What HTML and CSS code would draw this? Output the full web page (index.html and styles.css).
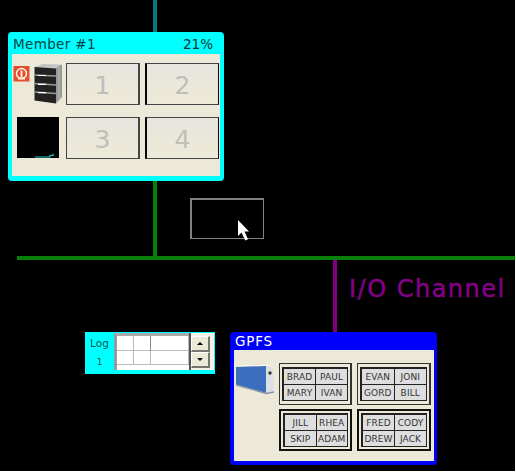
FILE: index.html
```html
<!DOCTYPE html>
<html lang="en">
<head>
<meta charset="utf-8">
<title>Cluster topology</title>
<link rel="stylesheet" href="styles.css">
</head>
<body>
<main class="canvas">
  <div class="wire wire-top"></div>
  <div class="wire wire-drop"></div>
  <div class="wire wire-bus"></div>
  <div class="wire wire-io"></div>
  <div class="io-label">I/O Channel</div>

  <section class="node member">
    <header class="member-head"><span class="member-name">Member #1</span><span class="member-load">21%</span></header>
    <div class="member-body">
      <div class="member-icons">
        <svg class="server" width="50" height="42" viewBox="0 0 50 42">
          <rect x="0.500" y="3" width="16" height="15.500" fill="#e2502f"/>
          <circle cx="8.500" cy="10.500" r="5" fill="none" stroke="#fff0e4" stroke-width="1.500"/>
          <path d="M8.500 7.500v6.500M5 15.500h7" fill="none" stroke="#fff0e4" stroke-width="1.800"/>
          <path d="M21.500 4L30 1L49 1.500L43 6Z" fill="#c4c4c4"/>
          <path d="M43 5L49 1.500V34L43 40.500Z" fill="#999"/>
          <path d="M46 4v32" stroke="#bcbcbc" stroke-width="1"/>
          <path d="M21.500 4L43 5.500V40.500L21.500 37.500Z" fill="#222"/>
          <path d="M21.500 12l21.500 1M21.500 20.500l21.500 1.500M21.500 29l21.500 1.500" stroke="#999" stroke-width="1.400" fill="none"/>
          <path d="M25 12.500h8M25 21.300h8M25 29.700h8" stroke="#fff" stroke-width="1.200"/>
        </svg>
        <svg class="monitor" width="42" height="41" viewBox="0 0 42 41">
          <rect width="42" height="41" fill="#000"/>
          <path d="M18 40h15v-1.500h3v-2" fill="none" stroke="#20c9cc" stroke-width="1.200"/>
        </svg>
      </div>
      <div class="slots">
        <div class="slot">1</div><div class="slot dark">2</div>
        <div class="slot">3</div><div class="slot dark">4</div>
      </div>
    </div>
  </section>

  <div class="ghost"></div>
  <svg class="cursor" width="12" height="22" viewBox="0 0 12 22">
    <path d="M0 0V16L3.500 12.500L7.300 20.500L10 19.300L6.500 11.500H11Z" fill="#fff"/>
  </svg>

  <section class="node log">
    <div class="log-label"><span>Log</span><span class="log-count">1</span></div>
    <div class="log-grid"><i></i><i></i><i></i><i></i><i></i><i></i></div>
    <div class="log-spin"><div class="spin up"></div><div class="spin down"></div></div>
  </section>

  <section class="node gpfs">
    <header class="gpfs-head">GPFS</header>
    <div class="gpfs-body">
      <svg class="disk" width="40" height="32" viewBox="0 0 40 32">
        <path d="M0 2L8 0H36L30 1.500Z" fill="#f4f3ee"/>
        <path d="M0 2L30 1V28L0 19.500Z" fill="#3b6fbd"/>
        <path d="M30 1L37 3L38 27L30 28.500Z" fill="#dcdfe3"/>
        <path d="M0 20L30 28.500L38 27" fill="none" stroke="#8594aa" stroke-width="1.300"/>
        <circle cx="34" cy="8" r="1.700" fill="#333"/>
      </svg>
      <div class="groups">
        <div class="group"><div class="names"><b>BRAD</b><b>PAUL</b><b>MARY</b><b>IVAN</b></div></div>
        <div class="group"><div class="names"><b>EVAN</b><b>JONI</b><b>GORD</b><b>BILL</b></div></div>
        <div class="group strong"><div class="names"><b>JILL</b><b>RHEA</b><b>SKIP</b><b>ADAM</b></div></div>
        <div class="group strong"><div class="names"><b>FRED</b><b>CODY</b><b>DREW</b><b>JACK</b></div></div>
      </div>
    </div>
  </section>
</main>
</body>
</html>
```
FILE: styles.css
```css
* { box-sizing: border-box; }
body { margin: 0; background: #fff; font-family: "DejaVu Sans", sans-serif; }
.canvas { position: relative; width: 515px; height: 471px; background: #000; overflow: hidden; }
.wire, .node, .io-label, .ghost, .cursor { position: absolute; }
.wire-top { left: 153px; top: 0; width: 4px; height: 33px; background: #08797c; }
.wire-drop { left: 153px; top: 179px; width: 4px; height: 79px; background: #087f08; }
.wire-bus { left: 17px; top: 256px; width: 498px; height: 4px; background: #087f08; }
.wire-io { left: 333px; top: 260px; width: 4px; height: 73px; background: #800080; }
.io-label { left: 349px; top: 274px; font-size: 24px; line-height: 30px; color: #850085; white-space: nowrap; -webkit-text-stroke: .5px #850085; letter-spacing: 1.5px; }

.member { left: 8px; top: 32px; width: 216px; height: 149px; background: #0ff; border-radius: 4px; padding: 0 4px 5px; display: flex; flex-direction: column; }
.member-head { height: 22px; display: flex; justify-content: space-between; padding: 0 7px 0 1px; font-size: 13.5px; line-height: 24px; color: #064444; }
.member-name { letter-spacing: .35px; }
.member-load { color: #033; }
.member-body { flex: 1; background: #ece9d8; display: flex; padding: 9px 1px 0 1px; }
.member-icons { width: 53px; display: flex; flex-direction: column; }
.server { display: block; }
.monitor { display: block; margin: 12px 0 0 4px; }
.slots { display: grid; grid-template-columns: 74px 74px; grid-template-rows: 42px 42px; gap: 12px 5px; align-content: start; }
.slot { border: 1px solid #444; border-right-width: 2px; background: linear-gradient(#e6e5e0, #ece9d8 70%); color: #bebeba; font-size: 25px; line-height: 43px; text-align: center; }
.slot.dark { border-left: 2px solid #080808; border-right: 1px solid #080808; }

.ghost { left: 190px; top: 198px; width: 74px; height: 41px; border: 2px solid #828282; border-width: 2px 1px 1px 2px; }
.cursor { left: 238px; top: 220px; }

.log { left: 85px; top: 332px; width: 130px; height: 42px; background: #0ff; display: flex; padding: 1px 1px 4px 0; }
.log-label { width: 29px; display: flex; flex-direction: column; align-items: center; font-size: 10.5px; line-height: 20px; color: #055; }
.log-count { font-size: 9px; line-height: 18px; }
.log-grid { width: 75px; background: #fff; border-top: 3px solid #aaa; border-left: 3px solid #999; display: grid; grid-template-columns: 17px 17px 1fr; grid-template-rows: 15px 14px; }
.log-grid i { border-right: 1px solid #bbb; border-bottom: 1px solid #bbb; }
.log-grid i:nth-child(2) { border-right-color: #888; }
.log-spin { flex: 1; background: #f4f2e8; padding: 3px 4px 2px 0; border-left: 2px solid #555; display: flex; flex-direction: column; }
.spin { flex: 1; background: #ece9d8; border: 1px solid #fff; border-right: 2px solid #77776f; border-bottom: 2px solid #77776f; display: flex; align-items: center; justify-content: center; }
.spin::after { content: ""; border: 3px solid transparent; }
.up::after { border-top: 0; border-bottom-color: #000; }
.down::after { border-bottom: 0; border-top-color: #000; }

.gpfs { left: 230px; top: 332px; width: 207px; height: 133px; background: #0000fa; border-radius: 4px; padding: 0 3px 4px 4px; display: flex; flex-direction: column; }
.gpfs-head { height: 18px; padding-left: 1px; font-size: 13.5px; line-height: 19px; letter-spacing: .8px; color: #fff; }
.gpfs-body { flex: 1; background: #ece9d8; display: flex; padding: 13px 0 0 2px; }
.disk { display: block; margin-top: 2px; }
.groups { display: grid; grid-template-columns: 73px 74px; grid-template-rows: 42px 42px; gap: 4px 5px; align-content: start; margin-left: 3px; }
.group { border: 1px solid #333; border-right: 2px solid #333; padding: 3px 2px; }
.group.strong { border: 2px solid #111; padding: 2px; }
.names { height: 100%; display: grid; grid-template-columns: 1fr 1fr; grid-template-rows: 1fr 1fr; border: 2px solid #222; border-width: 2px 1px 1px 2px; background: #222; gap: 1px; }
.names b { background: #dedede; font-weight: 400; font-size: 9px; line-height: 16px; letter-spacing: .1px; color: #333; text-align: center; overflow: hidden; min-width: 0; }
```
